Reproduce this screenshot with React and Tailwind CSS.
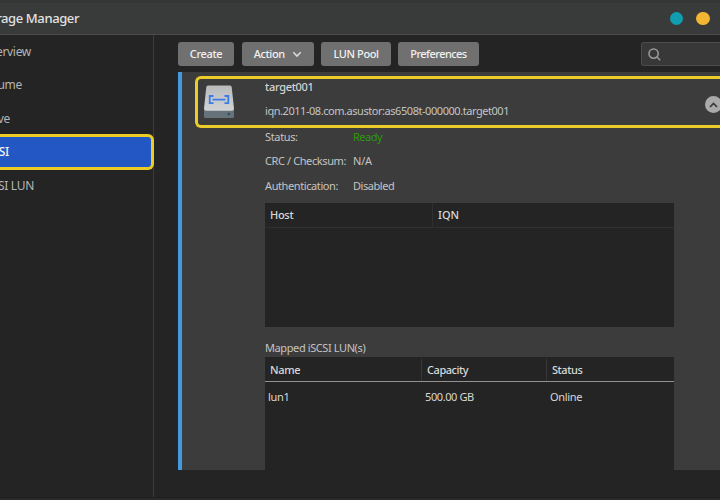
import React from "react";

const navItems = [
  { label: "Overview", box: "w-[31px]", active: false },
  { label: "Volume", box: "w-[22px]", active: false },
  { label: "Drive", box: "w-[10px]", active: false },
  { label: "iSCSI", box: "w-[9px]", active: true },
  { label: "iSCSI LUN", box: "w-[34px]", active: false },
];

function DriveIcon() {
  return (
    <svg width="32" height="34" viewBox="0 0 32 34" className="shrink-0">
      <defs>
        <linearGradient id="driveTop" x1="0" y1="0" x2="0" y2="1">
          <stop offset="0" stopColor="#b9babc" />
          <stop offset="1" stopColor="#d2d3d5" />
        </linearGradient>
      </defs>
      <path d="M1 25H31V31.5Q31 33 29.5 33H2.5Q1 33 1 31.5Z" fill="#66727a" />
      <path d="M5 .5H27Q28.5 .5 28.7 2L31 23.5Q31 25.7 29 25.7H3Q1 25.7 1 23.5L3.3 2Q3.5 .5 5 .5Z" fill="url(#driveTop)" />
      <path d="M10.5 11H6.7V18.2H10.5M21.5 11H25.3V18.2H21.5M9.5 14.6H22.5" fill="none" stroke="#3b7be8" strokeWidth="1.8" />
      <circle cx="25.8" cy="29" r="1.3" fill="#2c4b70" />
    </svg>
  );
}

function Button({ className, children }) {
  return (
    <button className={`flex h-6 shrink-0 items-center justify-center rounded-[3px] bg-[#707070] text-[11px] font-medium text-[#f0f0f0] ${className}`}>
      {children}
    </button>
  );
}

function Detail({ label, value, labelClass, valueClass }) {
  return (
    <div className="flex h-[24.5px] items-center whitespace-nowrap text-[11px]">
      <div className="w-[88px] shrink-0"><span className={labelClass}>{label}</span></div>
      <span className={valueClass}>{value}</span>
    </div>
  );
}

export default function App() {
  return (
    <div className="flex h-[500px] w-[720px] flex-col overflow-hidden bg-[#242424] font-['Noto_Sans','Open_Sans',sans-serif] text-[#c4c4c4]">
      <header className="flex h-[35px] shrink-0 items-center border-b border-[#4b4b4b] bg-[#393a3a]">
        <div className="flex h-full w-full items-center border-t-[3px] border-[#343535]">
          <div className="flex w-[79px] justify-end whitespace-nowrap">
            <span className="text-[13px] font-medium tracking-[-0.4px] text-[#e2e2e2]">Storage Manager</span>
          </div>
          <div className="ml-auto flex gap-[13px] pr-[10.5px]">
            <span className="size-[13.5px] rounded-full bg-[#119db0]" />
            <span className="size-[13.5px] rounded-full bg-[#f3b632]" />
          </div>
        </div>
      </header>

      <div className="flex min-h-0 flex-1">
        <nav className="w-[154px] shrink-0 border-r border-[#3c3c3c]">
          {navItems.map((item) => (
            <div
              key={item.label}
              className={
                item.active
                  ? "-my-[1.25px] -mr-px flex h-9 items-center rounded-r-[6px] border-[3px] border-l-0 border-[#eccb25] bg-[#2257c4] text-[#f2f2f2]"
                  : "flex h-[33.5px] items-center text-[#b5b5b5]"
              }
            >
              <div className={`flex justify-end whitespace-nowrap text-[12px] tracking-[-0.3px] ${item.box}`}>
                <span className={item.active ? "font-medium" : ""}>{item.label}</span>
              </div>
            </div>
          ))}
        </nav>

        <main className="flex min-w-0 flex-1 flex-col pl-6 pt-[7px]">
          <div className="flex h-[30px] shrink-0">
            <Button className="w-14 tracking-[-0.35px]">Create</Button>
            <Button className="ml-[7.5px] w-[72.5px] gap-[7px] tracking-[-0.4px]">
              Action
              <svg width="10" height="7" viewBox="0 0 10 7" fill="none" stroke="#d8d8d8" strokeWidth="1.6">
                <path d="M1.3 1.3L5 5L8.7 1.3" />
              </svg>
            </Button>
            <Button className="ml-[7px] w-[70px] tracking-[-0.4px]">LUN Pool</Button>
            <Button className="ml-[7px] w-[81px] tracking-[-0.55px]">Preferences</Button>
            <div className="ml-auto flex h-6 w-[79.5px] items-center rounded-l-[3px] border border-r-0 border-[#4c4c4c] bg-[#383838] pl-[6.5px] pt-px">
              <svg width="13" height="13" viewBox="0 0 13 13" fill="none" stroke="#999" strokeWidth="1.6">
                <circle cx="5.6" cy="5.6" r="4.6" />
                <path d="M8.8 8.8L12.2 12.2" />
              </svg>
            </div>
          </div>

          <section className="flex h-[398px] shrink-0 flex-col overflow-hidden border-l-4 border-[#429be1] bg-[#3c3c3c]">
            <div className="ml-[13px] mt-[3.5px] flex h-[52px] shrink-0 items-center rounded-l-[6px] border-[3px] border-r-0 border-[#ebcc28] bg-[#3b3c3b]">
              <div className="flex w-[67px] shrink-0 pl-[5px] pt-px"><DriveIcon /></div>
              <div className="-mt-[5px] flex flex-col whitespace-nowrap text-[11px]">
                <span className="flex h-[25px] items-center tracking-[-0.3px] font-medium text-[#d4d4d4]">target001</span>
                <span className="flex h-[23px] items-center tracking-[-0.45px]">iqn.2011-08.com.asustor:as6508t-000000.target001</span>
              </div>
              <div className="-mr-[2px] ml-auto mt-[6px] flex size-[17px] shrink-0 items-center justify-center rounded-full bg-[#aaa]">
                <svg width="9" height="6" viewBox="0 0 9 6" fill="none" stroke="#3a3a3a" strokeWidth="1.7">
                  <path d="M1 5L4.5 1.4L8 5" />
                </svg>
              </div>
            </div>

            <div className="ml-[83px] flex w-[408.5px] flex-col">
              <div className="-mt-[3px] flex h-[78px] shrink-0 flex-col">
                <Detail label="Status:" value="Ready" labelClass="tracking-[-0.35px]" valueClass="text-[#2e9908] tracking-[-0.5px]" />
                <Detail label="CRC / Checksum:" value="N/A" labelClass="tracking-[-0.4px]" valueClass="tracking-[-0.2px]" />
                <Detail label="Authentication:" value="Disabled" labelClass="tracking-[-0.4px]" valueClass="tracking-[-0.45px]" />
              </div>

              <div className="mt-[0.5px] h-[124px] shrink-0 bg-[#242424] text-[11px] font-medium text-[#d8d8d8]">
                <div className="flex h-[25px] items-center border-b border-[#303030]">
                  <div className="flex h-full w-[168px] items-center border-r border-[#303030] pl-[5px] tracking-[-0.3px]">Host</div>
                  <div className="pl-[5px]">IQN</div>
                </div>
              </div>

              <div className="flex h-[30px] shrink-0 items-end whitespace-nowrap text-[11px] leading-[18px] tracking-[-0.4px]">Mapped iSCSI LUN(s)</div>

              <div className="h-[114px] shrink-0 bg-[#242424] text-[11px] text-[#d8d8d8]">
                <div className="flex h-[25px] items-end border-b border-[#929292] font-medium">
                  <div className="flex h-[22px] w-[157px] items-center border-r border-[#383838] pl-[5px] tracking-[-0.35px]">Name</div>
                  <div className="flex h-[22px] w-[125px] items-center border-r border-[#383838] pl-[5px] tracking-[-0.45px]">Capacity</div>
                  <div className="flex h-[22px] items-center pl-[5px] tracking-[-0.45px]">Status</div>
                </div>
                <div className="flex h-[31px] items-center">
                  <div className="w-[157px] pl-[3px] tracking-[-0.3px]">lun1</div>
                  <div className="w-[125px] pl-[3px] tracking-[-0.4px]">500.00 GB</div>
                  <div className="pl-[3px] tracking-[-0.3px]">Online</div>
                </div>
              </div>
            </div>
          </section>
        </main>
      </div>
      <div className="h-[3px] shrink-0 border-t border-[#1d1d1d] bg-[#2a2a2a]" />
    </div>
  );
}
